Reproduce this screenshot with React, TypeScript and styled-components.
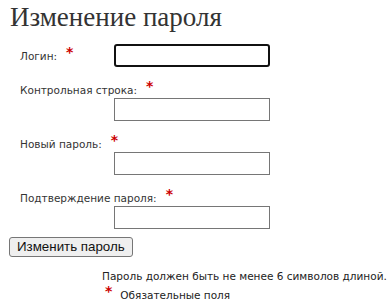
import styled, { createGlobalStyle } from 'styled-components';

const GlobalStyle = createGlobalStyle`
  html, body {
    margin: 0;
    padding: 0;
    background: #ffffff;
  }
  body {
    font-family: "DejaVu Sans", Verdana, sans-serif;
    color: #333333;
  }
`;

const Page = styled.div`
  width: 390px;
  height: 306px;
  overflow: hidden;
`;

const Title = styled.h1`
  margin: 0;
  padding: 2px 0 0 10px;
  font-family: "Liberation Serif", "Times New Roman", serif;
  font-weight: normal;
  font-size: 27px;
  line-height: 30px;
  color: #333333;
`;

const Form = styled.form`
  display: flex;
  flex-direction: column;
  padding-top: 12px;
`;

const Field = styled.div<{ $inline?: boolean }>`
  display: flex;
  flex-direction: ${(p) => (p.$inline ? 'row' : 'column')};
  align-items: ${(p) => (p.$inline ? 'center' : 'flex-start')};
  & + & {
    margin-top: 15px;
  }
`;

const Label = styled.label<{ $inline?: boolean }>`
  display: block;
  box-sizing: border-box;
  width: ${(p) => (p.$inline ? '114px' : 'auto')};
  height: ${(p) => (p.$inline ? 'auto' : '16px')};
  padding-left: 20px;
  font-size: 10.5px;
  line-height: 16px;
  color: #333333;
  white-space: nowrap;
`;

const Required = styled.span`
  margin-left: 9px;
  color: #cc0000;
  font-weight: bold;
  font-size: 14px;
  line-height: 0;
  vertical-align: 3px;
`;

const Input = styled.input<{ $focused?: boolean }>`
  box-sizing: border-box;
  width: 156px;
  height: 23px;
  margin: 0 0 0 ${(p) => (p.$focused ? '0' : '114px')};
  padding: 1px 3px;
  background: #ffffff;
  border: ${(p) => (p.$focused ? '2px solid #111111' : '1px solid #767676')};
  border-radius: ${(p) => (p.$focused ? '3px' : '0')};
  font-size: 13px;
  outline: none;
`;

const Submit = styled.button`
  align-self: flex-start;
  box-sizing: border-box;
  margin: 8px 0 0 9px;
  height: 20px;
  padding: 0 7px;
  background: #efefef;
  border: 1px solid #767676;
  border-radius: 3px;
  font-family: "Liberation Sans", Arial, sans-serif;
  font-size: 13.33px;
  line-height: 16px;
  color: #111111;
`;

const Notes = styled.div`
  padding: 10px 0 0 102px;
  font-size: 10.5px;
  line-height: 19px;
  color: #222222;
`;

const NoteLine = styled.div`
  white-space: nowrap;
`;

const LegendStar = styled(Required)`
  margin: 0 8px 0 3px;
`;

export default function App() {
  return (
    <Page>
      <GlobalStyle />
      <Title>Изменение пароля</Title>
      <Form onSubmit={(e) => e.preventDefault()}>
        <Field $inline>
          <Label $inline>
            Логин:<Required>*</Required>
          </Label>
          <Input $focused type="text" />
        </Field>
        <Field>
          <Label>
            Контрольная строка:<Required>*</Required>
          </Label>
          <Input type="text" />
        </Field>
        <Field>
          <Label>
            Новый пароль:<Required>*</Required>
          </Label>
          <Input type="password" />
        </Field>
        <Field>
          <Label>
            Подтверждение пароля:<Required>*</Required>
          </Label>
          <Input type="password" />
        </Field>
        <Submit type="submit">Изменить пароль</Submit>
      </Form>
      <Notes>
        <NoteLine>Пароль должен быть не менее 6 символов длиной.</NoteLine>
        <NoteLine>
          <LegendStar>*</LegendStar>Обязательные поля
        </NoteLine>
      </Notes>
    </Page>
  );
}
